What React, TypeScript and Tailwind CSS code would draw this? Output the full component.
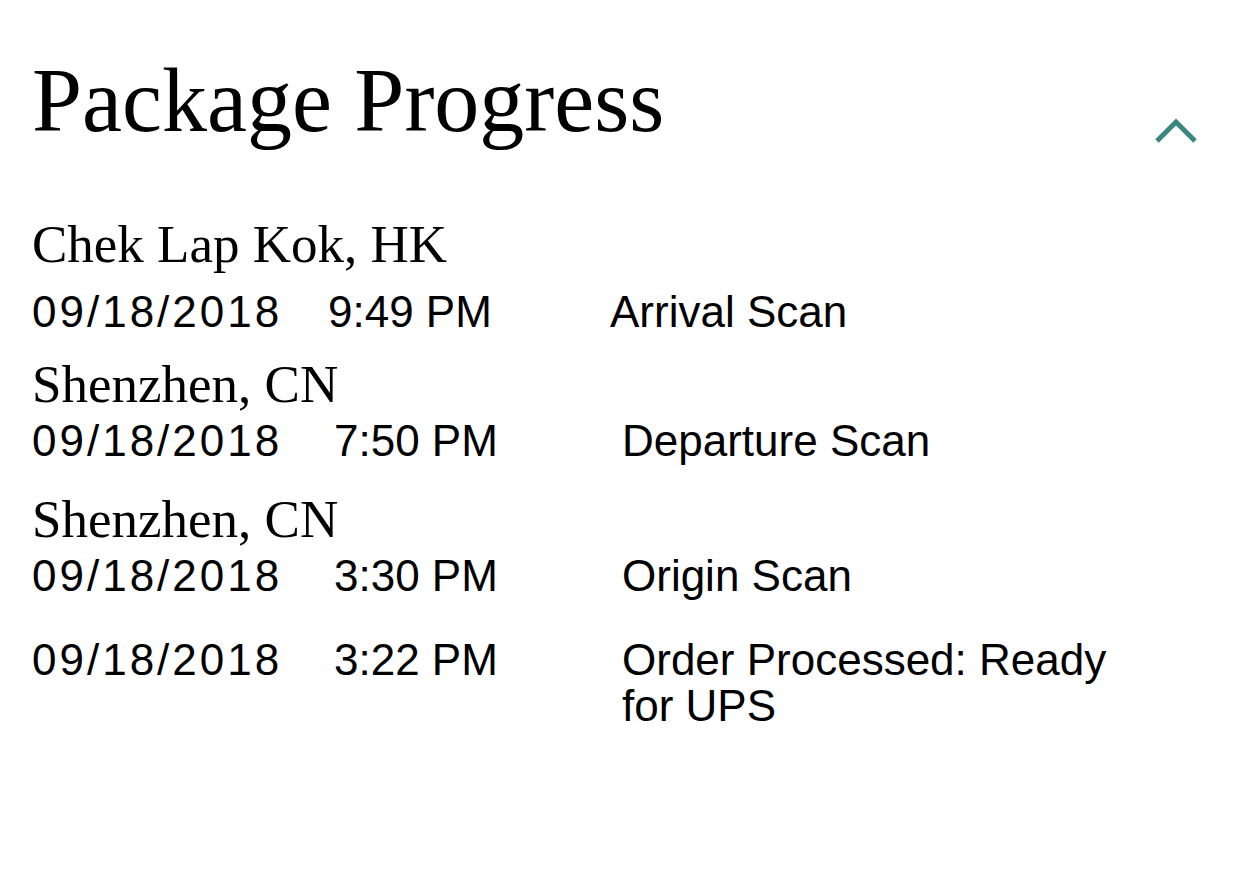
import React from "react";

type Scan = {
  location?: string;
  date: string;
  time: string;
  activity: string;
  locGap: string;
  rowGap: string;
  timeCol: string;
  descCol: string;
};

const scans: Scan[] = [
  {
    location: "Chek Lap Kok, HK",
    date: "09/18/2018",
    time: "9:49 PM",
    activity: "Arrival Scan",
    locGap: "mt-[71px]",
    rowGap: "mt-[17px]",
    timeCol: "w-[296px]",
    descCol: "w-[282px]",
  },
  {
    location: "Shenzhen, CN",
    date: "09/18/2018",
    time: "7:50 PM",
    activity: "Departure Scan",
    locGap: "mt-[21px]",
    rowGap: "mt-[6px]",
    timeCol: "w-[302px]",
    descCol: "w-[288px]",
  },
  {
    location: "Shenzhen, CN",
    date: "09/18/2018",
    time: "3:30 PM",
    activity: "Origin Scan",
    locGap: "mt-[27px]",
    rowGap: "mt-[6px]",
    timeCol: "w-[302px]",
    descCol: "w-[288px]",
  },
  {
    date: "09/18/2018",
    time: "3:22 PM",
    activity: "Order Processed: Ready for UPS",
    locGap: "",
    rowGap: "mt-[38px]",
    timeCol: "w-[302px]",
    descCol: "w-[288px]",
  },
];

export default function App() {
  return (
    <div className="min-h-[890px] w-[1234px] bg-white text-black pl-8 pr-[36px]">
      <div className="flex items-start justify-between pt-[57px]">
        <h1 className="font-['Liberation_Serif',serif] text-[90px] leading-[88px] font-normal">
          Package Progress
        </h1>
        <svg
          width="44"
          height="26"
          viewBox="0 0 44 26"
          className="mt-[61px]"
          fill="none"
          stroke="#3a877e"
          strokeWidth="5"
        >
          <polyline points="3,23 22,4 41,23" />
        </svg>
      </div>

      {scans.map((s, i) => (
        <div key={i}>
          {s.location && (
            <div
              className={`${s.locGap} font-['Liberation_Serif',serif] text-[53px] leading-[56px]`}
            >
              {s.location}
            </div>
          )}
          <div
            className={`${s.rowGap} flex items-start font-['Liberation_Sans',sans-serif] text-[44px] leading-[46px]`}
          >
            <div className={`${s.timeCol} shrink-0 tracking-[3px]`}>{s.date}</div>
            <div className={`${s.descCol} shrink-0`}>{s.time}</div>
            <div className="w-[520px]">{s.activity}</div>
          </div>
        </div>
      ))}
    </div>
  );
}
